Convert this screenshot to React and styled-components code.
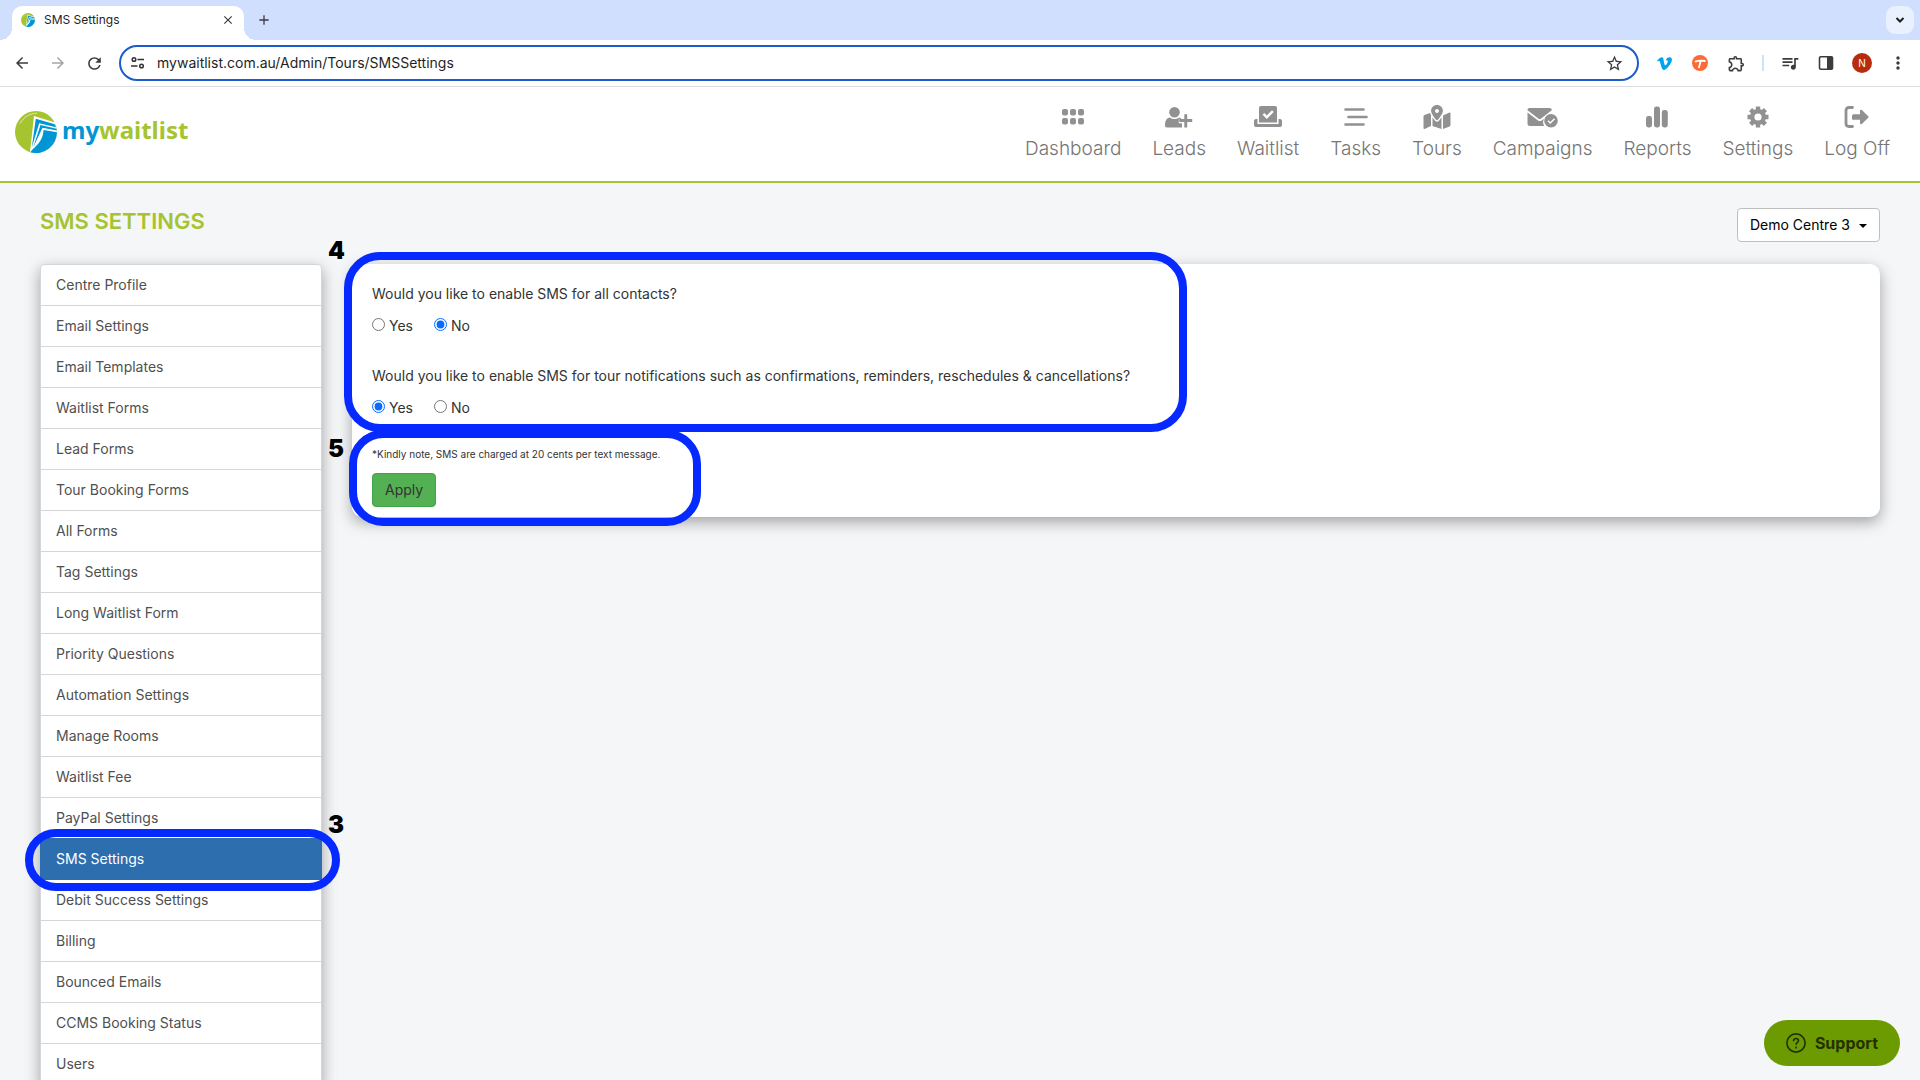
import React, { useState } from 'react';
import styled, { createGlobalStyle } from 'styled-components';
import { FaMapMarkedAlt, FaVimeoV } from 'react-icons/fa';
import {
  MdAdd,
  MdArrowBack,
  MdArrowForward,
  MdClose,
  MdMoreVert,
  MdOutlineExtension,
  MdQueueMusic,
  MdRefresh,
  MdStarOutline,
} from 'react-icons/md';

const GlobalStyle = createGlobalStyle`
  * {
    box-sizing: border-box;
  }

  body {
    margin: 0;
    color: #333;
    font-family: Inter, "Noto Sans", sans-serif;
    font-size: 14px;
    line-height: 20px;
  }

  button, input, select {
    font: inherit;
  }

  a {
    color: inherit;
    text-decoration: none;
  }
`;

const Window = styled.div`
  display: flex;
  flex-direction: column;
  height: 100vh;
  overflow: hidden;
  background-color: #f5f6f8;
`;

/* browser */

const TabStrip = styled.div`
  display: flex;
  flex: none;
  align-items: flex-end;
  height: 40px;
  padding: 0 6px 0 12px;
  background-color: #d0dffd;
`;

const Tab = styled.div`
  position: relative;
  display: flex;
  align-items: center;
  gap: 9px;
  width: 232px;
  height: 34px;
  padding: 0 8px 6px 9px;
  background-color: #fff;
  border-radius: 10px 10px 0 0;
  color: #1f1f1f;
  font-size: 12px;

  &::before,
  &::after {
    content: '';
    position: absolute;
    bottom: 0;
    width: 12px;
    height: 12px;
  }

  &::before {
    left: -12px;
    background: radial-gradient(circle at 0 0, transparent 12px, #fff 12px);
  }

  &::after {
    right: -12px;
    background: radial-gradient(circle at 100% 0, transparent 12px, #fff 12px);
  }
`;

const TabTitle = styled.span`
  flex: 1;
`;

const IconButton = styled.button`
  display: flex;
  flex: none;
  align-items: center;
  justify-content: center;
  width: ${props => props.$size || 24}px;
  height: ${props => props.$size || 24}px;
  padding: 0;
  border: 0;
  background: none;
  color: ${props => props.$color || '#3c3c3c'};
`;

const NewTab = styled(IconButton)`
  margin: 0 auto 8px 8px;
`;

const TabSearch = styled(IconButton)`
  margin-bottom: 6px;
  background-color: #e9f0fe;
  border-radius: 9px;
`;

const Toolbar = styled.div`
  display: flex;
  flex: none;
  align-items: center;
  height: 47px;
  padding: 0 10px;
  background-color: #fff;
  border-bottom: 1px solid #dcdcdc;
`;

const BrowserNav = styled.div`
  display: flex;
  gap: 12px;
  margin-right: 13px;
`;

const AddressBar = styled.div`
  display: flex;
  flex: 1;
  align-items: center;
  gap: 12px;
  height: 36px;
  padding: 0 11px 0 10px;
  border: 2px solid #1b5bcb;
  border-radius: 18px;
`;

const AddressInput = styled.input`
  flex: 1;
  min-width: 0;
  padding: 0;
  border: 0;
  outline: 0;
  background: none;
  color: #1f1f1f;
`;

const Extensions = styled.div`
  display: flex;
  align-items: center;
  gap: 12px;
  margin-left: 13px;
`;

const Divider = styled.span`
  width: 2px;
  height: 16px;
  margin: 0 2px;
  background-color: #d0dffd;
`;

const Avatar = styled.button`
  width: 20px;
  height: 20px;
  margin: 0 2px;
  padding: 0;
  border: 0;
  border-radius: 50%;
  background-color: #b92b0d;
  color: #fff;
  font-size: 10px;
  line-height: 20px;
`;

/* site header */

const Header = styled.header`
  display: flex;
  flex: none;
  align-items: center;
  justify-content: space-between;
  height: 96px;
  padding: 0 30px 0 15px;
  background-color: #fff;
  border-bottom: 2px solid #a5c42f;
`;

const Logo = styled.a`
  display: flex;
  align-items: center;
  gap: 5px;
  margin-bottom: 4px;
  color: #a5c42f;
  font-family: "Noto Sans", sans-serif;
  font-size: 24px;
  font-weight: 700;
  line-height: 32px;
`;

const LogoName = styled.span`
  padding-bottom: 4px;
`;

const LogoAccent = styled.span`
  color: #0095d3;
`;

const Menu = styled.nav`
  display: flex;
  gap: 31px;
`;

const MenuLink = styled.a`
  display: flex;
  flex-direction: column;
  align-items: center;
  gap: 6px;
  color: #757575;
  font-size: 19px;
  font-weight: 300;
  line-height: 28px;

  svg {
    height: 24px;
    color: #919191;
  }
`;

/* page */

const Page = styled.main`
  flex: 1;
  min-height: 0;
  padding: 25px 40px 0;
`;

const PageHead = styled.div`
  display: flex;
  justify-content: space-between;
  height: 56px;
`;

const Title = styled.h1`
  margin: 0;
  color: #a5c42f;
  font-size: 22px;
  font-weight: 600;
  line-height: 26px;
`;

const CentrePicker = styled.div`
  position: relative;
  height: 34px;
  color: #000;

  svg {
    position: absolute;
    top: 16px;
    right: 13px;
    pointer-events: none;
  }
`;

const CentreSelect = styled.select`
  appearance: none;
  width: 143px;
  height: 34px;
  padding: 0 24px 0 12px;
  border: 1px solid #bfbfbf;
  border-radius: 4px;
  background-color: #fff;
  color: inherit;
`;

const Columns = styled.div`
  display: grid;
  grid-template-columns: 282px 1fr;
  gap: 30px;
  align-items: start;
`;

const Sidebar = styled.ul`
  margin: 0;
  padding: 0;
  list-style: none;
  background-color: #fff;
  border: 1px solid #d5d6d8;
  border-radius: 4px 4px 0 0;
  box-shadow: 0 5px 15px rgba(0, 0, 0, 0.35);
`;

const SidebarItem = styled.li`
  position: relative;
`;

const SidebarLink = styled.a`
  display: block;
  height: ${props => (props.$active ? 42 : 41)}px;
  margin: ${props => (props.$active ? '-1px -1px 0' : 0)};
  padding: ${props => (props.$active ? '11px 16px' : '10px 15px')};
  border-bottom: 1px solid ${props => (props.$active ? '#2d6eae' : '#d5d6d8')};
  background-color: ${props => (props.$active ? '#2d6eae' : 'transparent')};
  color: ${props => (props.$active ? '#fff' : '#505050')};
`;

const Card = styled.form`
  padding: 20px 20px 10px;
  background-color: #fff;
  border-radius: 10px;
  box-shadow: 0 5px 15px rgba(0, 0, 0, 0.35);
`;

const Questions = styled.div`
  position: relative;
  display: flex;
  flex-direction: column;
  gap: 30px;
  max-width: 795px;
`;

const Question = styled.fieldset`
  min-width: 0;
  margin: 0;
  padding: 0;
  border: 0;
`;

const Legend = styled.legend`
  margin-bottom: 12px;
  padding: 0;
`;

const Options = styled.div`
  display: flex;
  gap: 21px;
`;

const Option = styled.label`
  display: flex;
  align-items: center;
  gap: 4px;
`;

const Radio = styled.input`
  width: 13px;
  height: 13px;
  margin: 0 0 3px;
  accent-color: #0a6cff;
`;

const Confirm = styled.div`
  position: relative;
  max-width: 299px;
  margin-top: 26px;
`;

const Note = styled.p`
  margin: 0 0 9px;
  font-size: 10px;
`;

const ApplyButton = styled.button`
  display: block;
  height: 34px;
  padding: 0 12px;
  border: 1px solid #41a447;
  border-radius: 4px;
  background-color: #53b053;
  color: #333;
`;

/* numbered outlines drawn over the page */

const Outline = styled.div`
  position: absolute;
  inset: ${props => props.$inset};
  border: 8px solid #0529ff;
  border-radius: ${props => props.$radius}px;
  pointer-events: none;
`;

const Step = styled.span`
  position: absolute;
  top: ${props => props.$top}px;
  left: ${props => props.$left}px;
  color: #000;
  font-size: 24px;
  font-weight: 900;
  line-height: 24px;
`;

const SupportButton = styled.button`
  position: fixed;
  right: 20px;
  bottom: 14px;
  display: flex;
  align-items: center;
  gap: 9px;
  height: 46px;
  padding: 0 22px;
  border: 0;
  border-radius: 23px;
  background-color: #6b9b00;
  color: #233002;
  font-size: 16px;
  font-weight: 700;
`;

const LogoMark = ({ size }) => (
  <svg width={size} height={size} viewBox="0 0 42 42" aria-hidden="true">
    <circle cx="21" cy="21" r="21" fill="#a5c42f" />
    <path d="M19 5 40 11.500 42 20a21 21 0 0 1-27 21Z" fill="#fff" />
    <path d="m20.800 7.800 19 5.400 1.200 3-16.800-4-7.400 24.300Z" fill="#0095d3" />
    <path d="m25.500 14 16 3.800.3 1.700-14.300-2.700-9.300 19.800Z" fill="#0095d3" />
    <path d="m28.500 19 13.500 2.300A21 21 0 0 1 15.500 41.300C17.500 37 28 32.300 28.500 19Z" fill="#0095d3" />
    <path d="M5 12.500C9 5.500 15 2.500 22 2.200" fill="none" stroke="#dcebac" strokeWidth="1" />
  </svg>
);

const ChevronIcon = () => (
  <svg width="10" height="6" viewBox="0 0 10 6" fill="none" stroke="#1f1f1f" strokeWidth="2">
    <path d="m1.500 1 3.500 3.500L8.500 1" />
  </svg>
);

const SiteInfoIcon = () => (
  <svg width="14" height="14" viewBox="0 0 14 14" fill="none" stroke="#303030" strokeWidth="1.500">
    <circle cx="3" cy="3.500" r="1.800" />
    <circle cx="10.500" cy="10" r="1.800" />
    <path d="M6.500 3.500H13M0 10h6.500" />
  </svg>
);

const TangoIcon = () => (
  <svg width="16" height="16" viewBox="0 0 16 16">
    <circle cx="8" cy="8" r="8" fill="#fd6a39" />
    <path d="M3 6.800c2-1 6-1.500 10.500-.8M8.600 6.200 6.800 13" fill="none" stroke="#fff" strokeWidth="1.800" />
  </svg>
);

const SidePanelIcon = () => (
  <svg width="16" height="16" viewBox="0 0 16 16">
    <rect x="1.500" y="1.800" width="13" height="12.400" rx="1.200" fill="none" stroke="#3c3c3c" strokeWidth="1.600" />
    <path d="M9 1.800h5.500v12.400H9Z" fill="#3c3c3c" />
  </svg>
);

const DashboardIcon = () => (
  <svg width="22" viewBox="0 0 22 24" fill="currentColor">
    {[4, 13].map(y => [0, 8, 16].map(x => <rect key={`${x}-${y}`} x={x} y={y} width="6" height="6.500" rx="2" />))}
  </svg>
);

const LeadsIcon = () => (
  <svg width="28" viewBox="0 0 28 24" fill="currentColor">
    <circle cx="9.500" cy="7.300" r="5.300" />
    <path d="M5 12.500c2.500 2 6.500 2 9 0 1.500.2 2.300 1 2.300 1.800h-2.500v4H17V22.500H2c-1.300 0-2-.7-2-2 0-4.500 1.500-7.500 5-8Z" />
    <path d="M19.300 9.300h2.900V14h5v3h-5v5.500h-2.900V17h-5v-3h5Z" />
  </svg>
);

const WaitlistIcon = () => (
  <svg width="28" viewBox="0 0 28 24" fill="currentColor">
    <path fillRule="evenodd" d="M7 1h14c1.300 0 2 .7 2 2v14.500H5V3c0-1.300.7-2 2-2Zm11 4.300-5.200 5.200-2.500-2.500-1.700 1.700 4.200 4.200 6.900-6.900Z" />
    <path d="M3.500 14H2c-1.200 0-2 .8-2 2v4c0 1.200.8 2 2 2h24c1.200 0 2-.8 2-2v-4c0-1.200-.8-2-2-2h-1.500v5h-21Z" />
  </svg>
);

const TasksIcon = () => (
  <svg width="24" viewBox="0 0 24 24" fill="none" stroke="currentColor" strokeWidth="2.600" strokeLinecap="round">
    <path d="M1.500 4.500h18M4.500 12h18M1.500 19.500h18" />
  </svg>
);

const CampaignsIcon = () => (
  <svg width="31" viewBox="0 0 31 24" fill="currentColor">
    <path d="M2.500 3h20c1.300 0 2.300.8 2.300 2.200l-11 8.500c-.8.500-1.500.5-2.200 0L.5 5.300C.5 3.800 1.300 3 2.500 3Z" />
    <path d="m.5 7.500 10.500 8c1.200.8 2.500.8 3.700 0l2.300-1.800c-1.200 2.300-1.200 5 .2 7.300H3c-1.700 0-2.500-1-2.500-2.500Z" />
    <path fillRule="evenodd" d="M24 9a6.800 6.800 0 1 1 0 13.600A6.800 6.800 0 0 1 24 9Zm3 4.300-3.700 3.700-1.800-1.700-1 1 2.800 2.800 4.700-4.800Z" />
  </svg>
);

const ReportsIcon = () => (
  <svg width="22" viewBox="0 0 22 24" fill="currentColor">
    <rect x="0" y="11" width="6" height="11.500" rx="2.400" />
    <rect x="8" y="1.500" width="6" height="21" rx="2.400" />
    <rect x="15.800" y="5" width="6" height="17.500" rx="2.400" />
  </svg>
);

const SettingsIcon = () => (
  <svg width="22" viewBox="0 0 22 24" fill="none" stroke="currentColor">
    <circle cx="11" cy="12" r="5.800" strokeWidth="4.400" />
    <g strokeWidth="4.400">
      {[0, 45, 90, 135].map(angle => (
        <path key={angle} d="M11 1.500v4M11 18.500v4" transform={`rotate(${angle} 11 12)`} />
      ))}
    </g>
  </svg>
);

const LogOffIcon = () => (
  <svg width="26" viewBox="0 0 26 24">
    <path d="M8.500 2.500H5c-1.800 0-3 1.200-3 3v13c0 1.800 1.200 3 3 3h3.500" fill="none" stroke="currentColor" strokeWidth="2.800" strokeLinecap="round" />
    <path d="M9 9.300h7V5.700c0-1 1-1.300 1.800-.6l6.500 6.200c.4.400.4 1 0 1.400l-6.500 6.200c-.8.700-1.800.4-1.800-.6v-3.600H9c-.7 0-1-.4-1-1v-3c0-.6.300-1 1-1Z" fill="currentColor" />
  </svg>
);

const HelpIcon = () => (
  <svg width="20" height="20" viewBox="0 0 20 20" fill="none" stroke="currentColor" strokeWidth="1.600">
    <circle cx="10" cy="10" r="9.100" />
    <path d="M7.500 8.200c0-3.700 5-3.400 5-.6 0 1.800-2.500 1.900-2.500 4.200M10 13.500v2" />
  </svg>
);

const menu = [
  { label: 'Dashboard', icon: <DashboardIcon /> },
  { label: 'Leads', icon: <LeadsIcon /> },
  { label: 'Waitlist', icon: <WaitlistIcon /> },
  { label: 'Tasks', icon: <TasksIcon /> },
  { label: 'Tours', icon: <FaMapMarkedAlt size={28} /> },
  { label: 'Campaigns', icon: <CampaignsIcon /> },
  { label: 'Reports', icon: <ReportsIcon /> },
  { label: 'Settings', icon: <SettingsIcon /> },
  { label: 'Log Off', icon: <LogOffIcon /> },
];

const settings = [
  'Centre Profile',
  'Email Settings',
  'Email Templates',
  'Waitlist Forms',
  'Lead Forms',
  'Tour Booking Forms',
  'All Forms',
  'Tag Settings',
  'Long Waitlist Form',
  'Priority Questions',
  'Automation Settings',
  'Manage Rooms',
  'Waitlist Fee',
  'PayPal Settings',
  'SMS Settings',
  'Debit Success Settings',
  'Billing',
  'Bounced Emails',
  'CCMS Booking Status',
  'Users',
];

const YesNo = ({ name, text, value, onChange }) => (
  <Question>
    <Legend>{text}</Legend>
    <Options>
      {['Yes', 'No'].map(answer => (
        <Option key={answer}>
          <Radio type="radio" name={name} checked={value === answer} onChange={() => onChange(answer)} />
          {answer}
        </Option>
      ))}
    </Options>
  </Question>
);

const Browser = () => (
  <>
    <TabStrip>
      <Tab>
        <LogoMark size={14} />
        <TabTitle>SMS Settings</TabTitle>
        <IconButton $size={16} aria-label="Close tab"><MdClose size={14} /></IconButton>
      </Tab>
      <NewTab aria-label="New tab"><MdAdd size={16} /></NewTab>
      <TabSearch $size={28} aria-label="Search tabs"><ChevronIcon /></TabSearch>
    </TabStrip>
    <Toolbar>
      <BrowserNav>
        <IconButton aria-label="Back"><MdArrowBack size={18} /></IconButton>
        <IconButton $color="#a5a5a5" aria-label="Forward"><MdArrowForward size={18} /></IconButton>
        <IconButton aria-label="Reload"><MdRefresh size={19} /></IconButton>
      </BrowserNav>
      <AddressBar>
        <SiteInfoIcon />
        <AddressInput aria-label="Address" defaultValue="mywaitlist.com.au/Admin/Tours/SMSSettings" />
        <IconButton aria-label="Bookmark"><MdStarOutline size={19} /></IconButton>
      </AddressBar>
      <Extensions>
        <IconButton $color="#00a5ee" aria-label="Vimeo"><FaVimeoV size={17} /></IconButton>
        <IconButton aria-label="Tango"><TangoIcon /></IconButton>
        <IconButton aria-label="Extensions"><MdOutlineExtension size={19} /></IconButton>
        <Divider />
        <IconButton aria-label="Media"><MdQueueMusic size={20} /></IconButton>
        <IconButton aria-label="Side panel"><SidePanelIcon /></IconButton>
        <Avatar aria-label="Profile">N</Avatar>
        <IconButton aria-label="More"><MdMoreVert size={20} /></IconButton>
      </Extensions>
    </Toolbar>
  </>
);

const App = () => {
  const [contacts, setContacts] = useState('No');
  const [tours, setTours] = useState('Yes');

  return (
    <Window>
      <GlobalStyle />
      <Browser />
      <Header>
        <Logo href="#">
          <LogoMark size={42} />
          <LogoName><LogoAccent>my</LogoAccent>waitlist</LogoName>
        </Logo>
        <Menu>
          {menu.map(({ label, icon }) => (
            <MenuLink key={label} href="#">
              {icon}
              {label}
            </MenuLink>
          ))}
        </Menu>
      </Header>
      <Page>
        <PageHead>
          <Title>SMS SETTINGS</Title>
          <CentrePicker>
            <CentreSelect aria-label="Centre">
              <option>Demo Centre 3</option>
            </CentreSelect>
            <svg width="8" height="4" viewBox="0 0 8 4"><path d="M0 0h8L4 4Z" /></svg>
          </CentrePicker>
        </PageHead>
        <Columns>
          <Sidebar>
            {settings.map(label => (
              <SidebarItem key={label}>
                <SidebarLink href="#" $active={label === 'SMS Settings'}>{label}</SidebarLink>
                {label === 'SMS Settings' && (
                  <>
                    <Outline $inset="-9px -19px -11px -16px" $radius={31} />
                    <Step $top={-25} $left={287}>3</Step>
                  </>
                )}
              </SidebarItem>
            ))}
          </Sidebar>
          <Card onSubmit={event => event.preventDefault()}>
            <Questions>
              <YesNo
                name="contacts"
                text="Would you like to enable SMS for all contacts?"
                value={contacts}
                onChange={setContacts}
              />
              <YesNo
                name="tours"
                text="Would you like to enable SMS for tour notifications such as confirmations, reminders, reschedules & cancellations?"
                value={tours}
                onChange={setTours}
              />
              <Outline $inset="-32px -20px -14px -28px" $radius={36} />
              <Step $top={-45} $left={-44}>4</Step>
            </Questions>
            <Confirm>
              <Note>*Kindly note, SMS are charged at 20 cents per text message.</Note>
              <ApplyButton type="submit">Apply</ApplyButton>
              <Outline $inset="-14px -30px -19px -23px" $radius={34} />
              <Step $top={-7} $left={-44}>5</Step>
            </Confirm>
          </Card>
        </Columns>
      </Page>
      <SupportButton type="button">
        <HelpIcon />
        Support
      </SupportButton>
    </Window>
  );
};

export default App;
